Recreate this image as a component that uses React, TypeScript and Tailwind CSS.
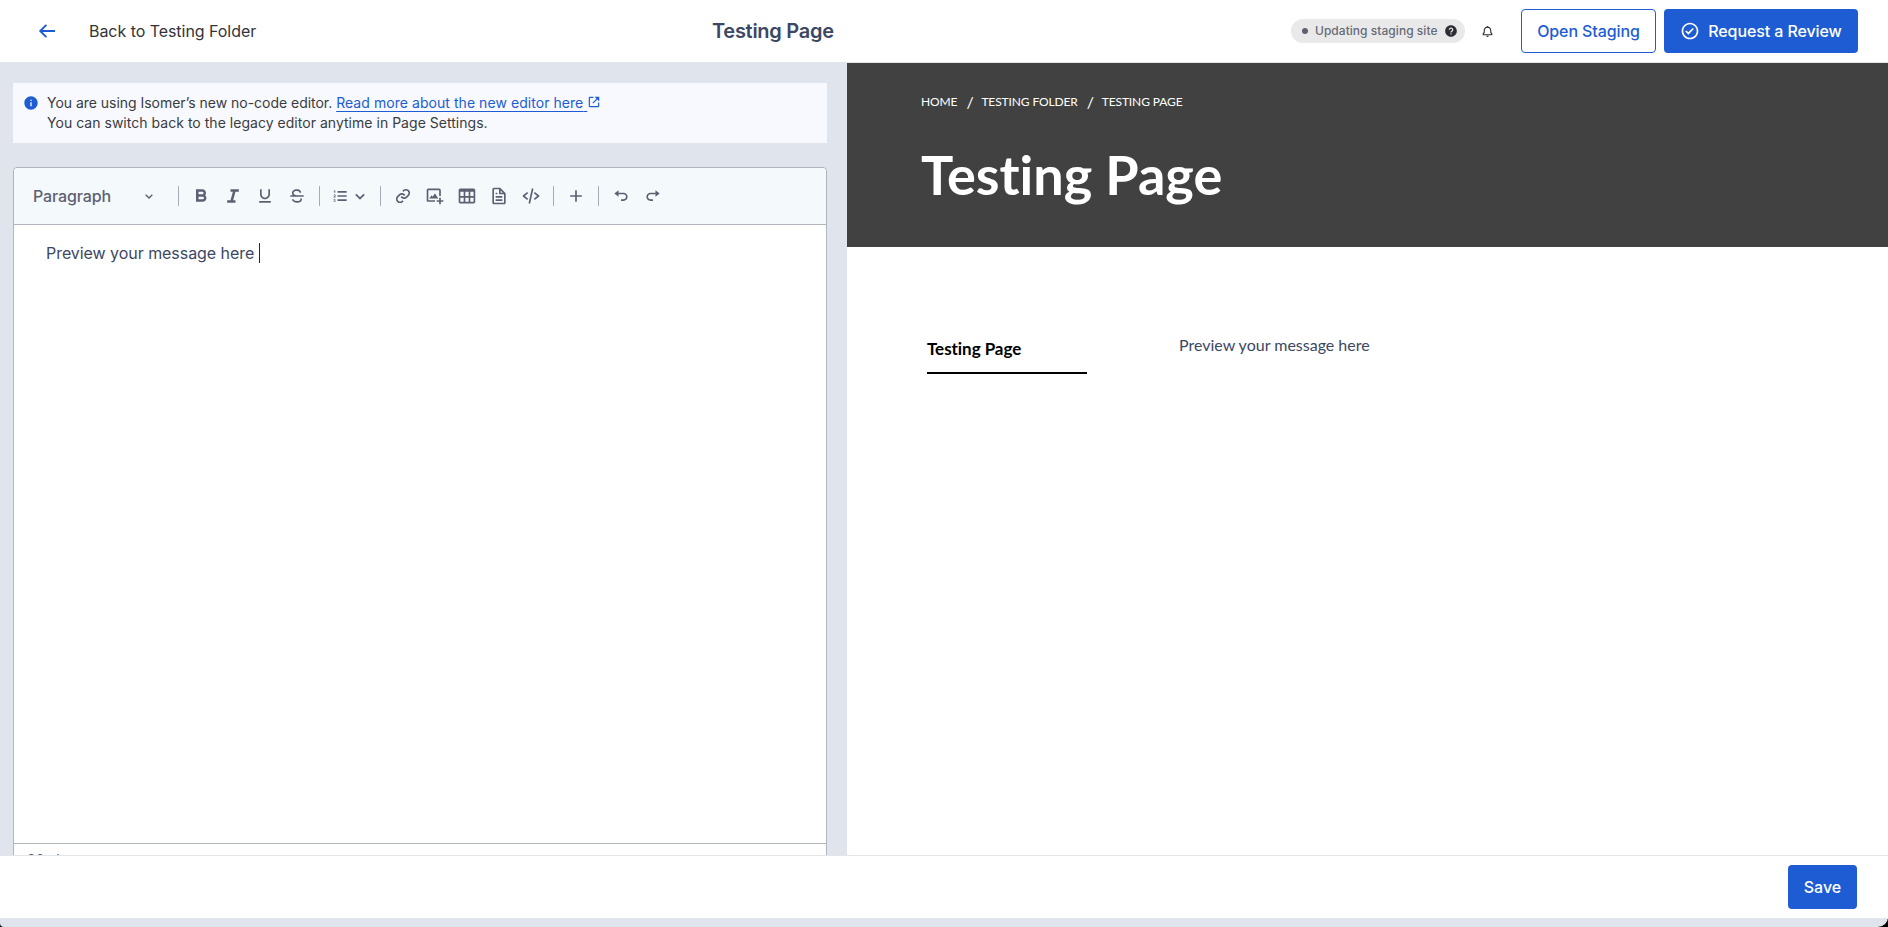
import type { ReactNode } from "react";
import {
  BiBell, BiBold, BiCheckCircle, BiChevronDown, BiCodeAlt, BiFile, BiImageAdd, BiItalic,
  BiLink, BiLinkExternal, BiListOl, BiPlus, BiRedo, BiStrikethrough,
  BiTable, BiUnderline, BiUndo, BiSolidInfoCircle, BiSolidHelpCircle,
} from "react-icons/bi";

function Tool({ children }: { children: ReactNode }) {
  return <button className="flex h-8 w-8 shrink-0 items-center justify-center">{children}</button>;
}

function Divider() {
  return <span className="h-5 w-px shrink-0 bg-[#a5abb9]" />;
}

function BackArrow() {
  return (
    <svg width="24" height="24" viewBox="0 0 24 24" fill="none" stroke="#1d5cd3" strokeWidth="1.9">
      <path d="M20 12H5.6M11.4 5.8 5.2 12l6.2 6.2" />
    </svg>
  );
}

function Header() {
  return (
    <header className="flex h-[63px] shrink-0 items-center border-b border-[#e3e5e9] bg-white">
      <div className="flex w-[712px] shrink-0 items-center pl-[35px]">
        <BackArrow />
        <span className="ml-[30px] text-base tracking-[-0.003em] text-[#333437]">Back to Testing Folder</span>
      </div>
      <h1 className="text-[20px] font-semibold tracking-[-0.014em] text-[#3c4764]">Testing Page</h1>
      <div className="flex flex-1 items-center justify-end pr-[30px]">
        <div className="flex h-6 w-[174px] items-center rounded-full bg-[#e9e9e9] pl-[11px]">
          <span className="h-1.5 w-1.5 rounded-full bg-[#5d6072]" />
          <span className="ml-[7px] text-xs font-medium tracking-[0.003em] whitespace-nowrap text-[#666b78]">Updating staging site</span>
          <BiSolidHelpCircle size={14} className="ml-[6px] text-[#2c2e34]" />
        </div>
        <BiBell size={13} className="mr-[27px] ml-[16px] text-[#2c2e34]" />
        <button className="mr-2 h-11 w-[135px] rounded border border-[#1d5cd3] text-base font-medium tracking-[-0.006em] text-[#1d5cd3]">Open Staging</button>
        <button className="flex h-11 w-[194px] items-center justify-center gap-2 rounded bg-[#1d5cd3] text-base font-medium tracking-[-0.006em] text-white">
          <BiCheckCircle size={20} />
          Request a Review
        </button>
      </div>
    </header>
  );
}

function Toolbar() {
  return (
    <div className="flex h-[57px] shrink-0 items-center rounded-t border-b border-[#afb4bd] bg-[#f4f9fc] text-[#5d6072]">
      <button className="flex w-[145px] items-center justify-between pr-[2px] pl-[19px] text-base font-medium tracking-[-0.008em]">
        Paragraph
        <BiChevronDown size={16} />
      </button>
      <div className="ml-[19px] flex items-center">
        <Divider />
        <div className="ml-[6px] flex">
          <Tool><BiBold size={20} /></Tool>
          <Tool><BiItalic size={20} /></Tool>
          <Tool><BiUnderline size={20} /></Tool>
          <Tool><BiStrikethrough size={20} /></Tool>
        </div>
        <span className="w-[6px]" />
        <Divider />
        <div className="flex w-[60px] items-center pl-[10px]">
          <BiListOl size={20} />
          <BiChevronDown size={20} />
        </div>
        <Divider />
        <div className="ml-[6px] flex">
          <Tool><BiLink size={20} /></Tool>
          <Tool><BiImageAdd size={20} /></Tool>
          <Tool><BiTable size={20} /></Tool>
          <Tool><BiFile size={20} /></Tool>
          <Tool><BiCodeAlt size={20} /></Tool>
        </div>
        <span className="w-[6px]" />
        <Divider />
        <div className="mx-[6px] flex"><Tool><BiPlus size={20} /></Tool></div>
        <Divider />
        <div className="ml-[6px] flex">
          <Tool><BiUndo size={20} /></Tool>
          <Tool><BiRedo size={20} /></Tool>
        </div>
      </div>
    </div>
  );
}

function EditorPane() {
  return (
    <section className="flex w-[847px] shrink-0 flex-col overflow-hidden bg-[#e0e4ed] pr-5 pl-[13px]">
      <div className="mt-5 flex h-[60px] shrink-0 bg-[#f7f9fe] pt-[10px] pl-[10px] text-[#3a3c41]">
        <BiSolidInfoCircle size={16} className="mt-[2px] text-[#1d5cd3]" />
        <div className="ml-2 text-sm">
          <p className="tracking-[-0.002em]">
            You are using Isomer’s new no-code editor.{" "}
            <a className="tracking-[0.004em] text-[#1d5cd3] underline underline-offset-3">
              Read more about the new editor here{" "}
            </a>
            <BiLinkExternal size={14} className="mb-[4px] inline text-[#1d5cd3]" />
          </p>
          <p className="tracking-[0.002em]">You can switch back to the legacy editor anytime in Page Settings.</p>
        </div>
      </div>
      <div className="mt-6 flex h-[760px] shrink-0 flex-col rounded-t border border-[#afb4bd] bg-white">
        <Toolbar />
        <div className="flex h-[619px] shrink-0 items-start border-b border-[#afb4bd] pt-[16px] pl-8 text-[#3c4764]">
          <p className="text-base leading-6 tracking-[-0.003em]">Preview your message here</p>
          <span className="ml-[5px] mt-[2px] h-5 w-px bg-[#1f2a44]" />
        </div>
        <p className="pt-[6px] pl-[13px] text-sm text-[#5d6072]">26 characters</p>
      </div>
    </section>
  );
}

function PreviewPane() {
  return (
    <section className="min-w-0 flex-1 bg-white font-['Lato',sans-serif] [font-variant-ligatures:none]">
      <div className="h-[184px] bg-[#414141] pt-[31px] pl-[74px] text-white">
        <nav className="flex h-4 items-center gap-[9px] text-xs tracking-[-0.01em]">
          <span>HOME</span>
          <span className="w-[6px] text-base leading-4">/</span>
          <span>TESTING FOLDER</span>
          <span className="w-[6px] text-base leading-4">/</span>
          <span>TESTING PAGE</span>
        </nav>
        <h2 className="mt-[31px] text-[54px] leading-[68px] font-bold">Testing Page</h2>
      </div>
      <div className="flex pt-[86px] pl-20">
        <div className="h-[41px] w-40 border-b-2 border-black pt-[4px] text-[17px] leading-6 font-bold tracking-[-0.003em] text-black">Testing Page</div>
        <p className="ml-[92px] text-base leading-6 text-[#3c4764]">Preview your message here</p>
      </div>
    </section>
  );
}

export default function App() {
  return (
    <div className="bg-black">
      <div className="flex h-[927px] w-[1888px] flex-col overflow-hidden rounded-br-[10px] rounded-bl-[4px] bg-[#e0e4ed] font-['Inter',sans-serif]">
        <Header />
        <main className="flex h-[792px] shrink-0">
          <EditorPane />
          <PreviewPane />
        </main>
        <footer className="flex h-16 shrink-0 items-center justify-end border-y border-[#e3e5e9] bg-white pr-[31px]">
          <button className="h-11 w-[69px] rounded bg-[#1d5cd3] text-base font-medium text-white">Save</button>
        </footer>
      </div>
    </div>
  );
}
